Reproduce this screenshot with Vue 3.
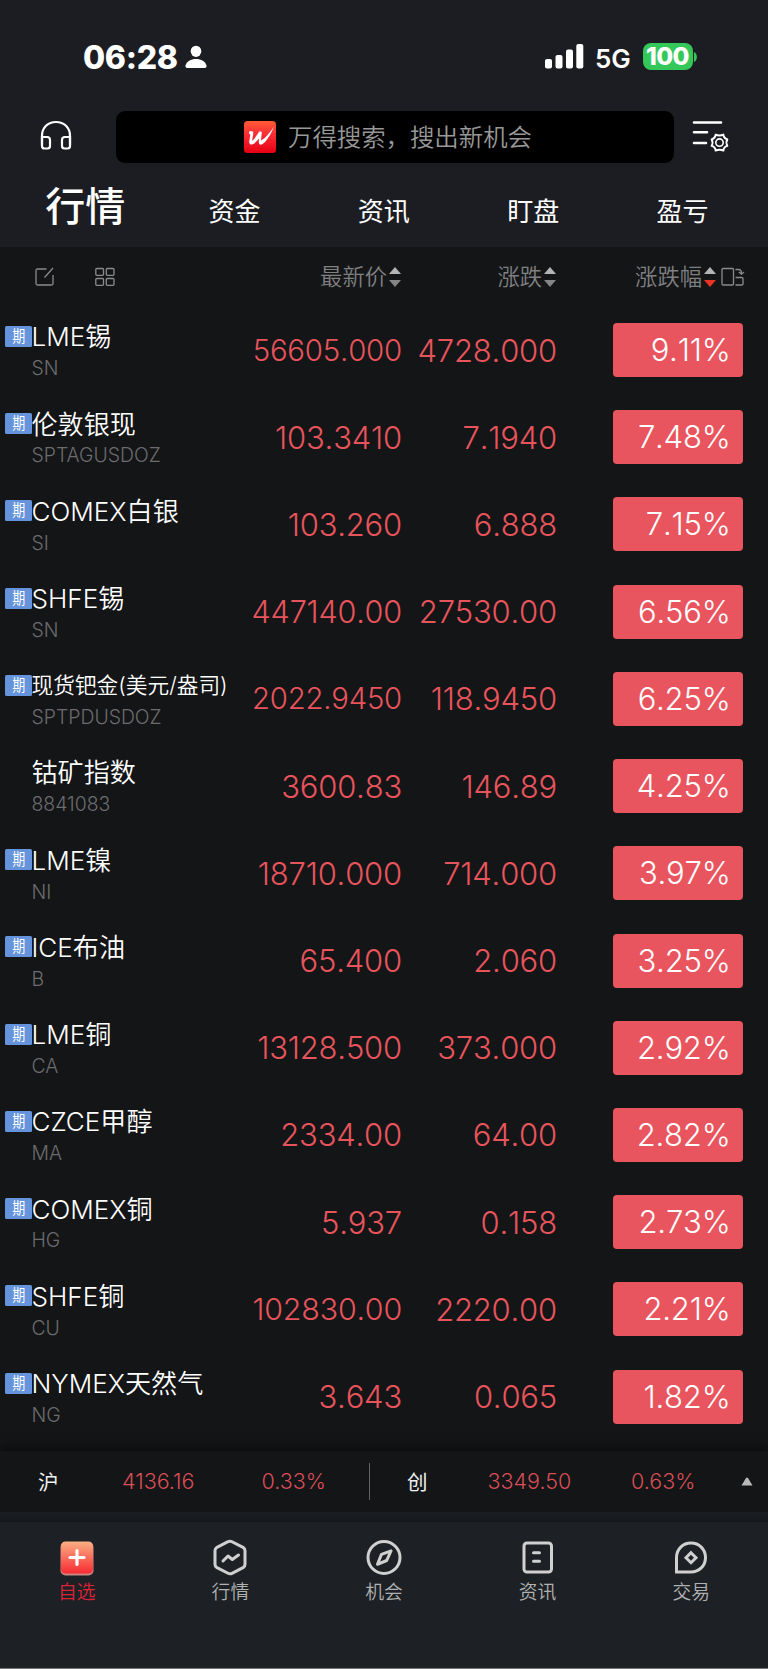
<script setup>
const tabs = ['行情', '资金', '资讯', '盯盘', '盈亏']
// `fit` is the reduced font size for prices that would overflow their column
const quotes = [
  { name: 'LME锡', code: 'SN', price: '56605.000', change: '4728.000', pct: '9.11%', future: true, fit: 29.4 },
  { name: '伦敦银现', code: 'SPTAGUSDOZ', price: '103.3410', change: '7.1940', pct: '7.48%', future: true },
  { name: 'COMEX白银', code: 'SI', price: '103.260', change: '6.888', pct: '7.15%', future: true },
  { name: 'SHFE锡', code: 'SN', price: '447140.00', change: '27530.00', pct: '6.56%', future: true, fit: 30.6 },
  { name: '现货钯金(美元/盎司)', code: 'SPTPDUSDOZ', price: '2022.9450', change: '118.9450', pct: '6.25%', future: true, long: true, fit: 29.3 },
  { name: '钴矿指数', code: '8841083', price: '3600.83', change: '146.89', pct: '4.25%', future: false },
  { name: 'LME镍', code: 'NI', price: '18710.000', change: '714.000', pct: '3.97%', future: true },
  { name: 'ICE布油', code: 'B', price: '65.400', change: '2.060', pct: '3.25%', future: true },
  { name: 'LME铜', code: 'CA', price: '13128.500', change: '373.000', pct: '2.92%', future: true },
  { name: 'CZCE甲醇', code: 'MA', price: '2334.00', change: '64.00', pct: '2.82%', future: true },
  { name: 'COMEX铜', code: 'HG', price: '5.937', change: '0.158', pct: '2.73%', future: true },
  { name: 'SHFE铜', code: 'CU', price: '102830.00', change: '2220.00', pct: '2.21%', future: true, fit: 30.4 },
  { name: 'NYMEX天然气', code: 'NG', price: '3.643', change: '0.065', pct: '1.82%', future: true },
]
</script>

<template>
  <div class="screen">
    <header class="top">
      <div class="status">
        <span class="clock">06:28</span>
        <svg class="person" width="22" height="24" viewBox="0 0 22 24">
          <ellipse cx="11" cy="6.3" rx="5.3" ry="5.6" fill="#fff" />
          <path d="M2.4 23C.8 23 .2 22 .5 20.600C1.500 16.500 5.800 14 11 14s9.500 2.500 10.500 6.600C21.800 22 21.200 23 19.600 23z" fill="#fff" />
        </svg>
        <svg class="signal" width="39" height="26" viewBox="0 0 39 26" fill="#fff">
          <rect x="0" y="15" width="7" height="9.500" rx="2" />
          <rect x="10.500" y="11" width="7" height="13.500" rx="2" />
          <rect x="21" y="5.500" width="7" height="19" rx="2" />
          <rect x="31.300" y="0" width="7" height="24.500" rx="2" />
        </svg>
        <span class="net">5G</span>
        <span class="battery">100</span>
        <svg class="nub" width="4" height="10" viewBox="0 0 4 10"><path d="M0 0C3.800 1.500 3.800 8.500 0 10z" fill="#34c759" /></svg>
      </div>

      <div class="searchbar">
        <svg class="phones" width="32" height="30" viewBox="0 0 32 30" fill="none" stroke="#fff" stroke-width="2.200">
          <path d="M2 25V16C2 7.500 8 2 16 2s14 5.500 14 14v9" />
          <path d="M2 17h5q3 0 3 3v6q0 2.500-2.500 2.500H4.500Q2 28.500 2 26zM30 17h-5q-3 0-3 3v6q0 2.500 2.500 2.500h3q2.500 0 2.500-2.500z" />
        </svg>
        <div class="search">
          <svg class="logo" width="32" height="32" viewBox="0 0 32 32">
            <defs>
              <linearGradient id="logoFill" x1="0" y1="0" x2="0" y2="1">
                <stop offset="0" stop-color="#ff5a36" />
                <stop offset=".45" stop-color="#fa2a36" />
                <stop offset="1" stop-color="#e60012" />
              </linearGradient>
            </defs>
            <rect width="32" height="32" rx="3.500" fill="url(#logoFill)" />
            <path d="M5 10.800C7 9.300 9.600 10 9.300 12.500L8.100 19.800C11 17.800 13.500 13 15.200 10.600C16.500 10.500 17.800 10.600 17.800 11.500L17 19.500C21 17.500 25.500 12 30 5.500C27.500 12 22.500 21 18.300 23.200C16 24.400 14.600 23 14.800 20.500L15 17.500C13 20 10.800 22.500 8.600 23.300C6.300 24 5 22.700 5.200 20.500L6.200 14.500Q6.500 12.800 5 12.700z" fill="#fff" />
          </svg>
          <span class="hint">万得搜索，搜出新机会</span>
        </div>
        <svg class="filter" width="38" height="34" viewBox="0 0 38 34" fill="none" stroke="#fff" stroke-linecap="round">
          <path d="M2 2.500h27M2 12.300h13M2 23h12" stroke-width="2.600" />
          <path d="M23.600 14.600Q27.500 16.400 31.400 14.600Q31.500 18 35.400 19.300Q33.500 22.500 35.400 25.900Q31.500 27 31.400 30.600Q27.500 28.800 23.600 30.600Q23.500 27 19.600 25.900Q21.500 22.500 19.600 19.300Q23.500 18 23.600 14.600z" stroke-width="1.900" stroke-linejoin="round" />
          <circle cx="27.500" cy="22.600" r="3.700" stroke-width="1.600" />
        </svg>
      </div>

      <nav class="tabs">
        <span v-for="(t, i) in tabs" :key="t" class="tab" :class="{ active: i === 0 }">{{ t }}</span>
      </nav>
    </header>

    <div class="cols">
      <div class="tools">
        <svg width="20" height="20" viewBox="0 0 20 20" fill="none" stroke="#8b8b8d" stroke-width="1.300">
          <path d="M11.500 2H2.500Q1 2 1 3.500v13Q1 18 2.500 18h14Q18 18 18 16.500V8M9.500 10.500L18 1" />
        </svg>
        <svg width="20" height="20" viewBox="0 0 20 20" fill="none" stroke="#8b8b8d" stroke-width="1.300">
          <rect x=".8" y="1.500" width="7.700" height="6.800" rx="1" /><rect x="11.300" y="1.500" width="7.700" height="6.800" rx="1" />
          <rect x=".8" y="11.500" width="7.700" height="6.800" rx="1" /><rect x="11.300" y="11.500" width="7.700" height="6.800" rx="1" />
        </svg>
      </div>
      <div v-for="label in ['最新价', '涨跌', '涨跌幅']" :key="label" class="col">
        <span>{{ label }}</span>
        <svg class="sort" width="12" height="20" viewBox="0 0 12 20">
          <path d="M0 7L6 0l6 7z" fill="#b4b4b4" />
          <path d="M0 13h12l-6 7z" :fill="label === '涨跌幅' ? '#ec3323' : '#858585'" />
        </svg>
        <svg v-if="label === '涨跌幅'" class="swap" width="24" height="20" viewBox="0 0 24 20" fill="none" stroke="#8b8b8d" stroke-width="1.300">
          <rect x="1" y="1.500" width="11.500" height="16.500" rx="1" />
          <path d="M14.500 2.500h3q3 0 3 4M17.800 5l2.700 2.200L23 5M14.500 10.500h6.300q1.200 0 1.200 1.200v5q0 1.300-1.200 1.300h-6.300" />
        </svg>
      </div>
    </div>

    <main class="list">
      <div v-for="q in quotes" :key="q.name" class="row">
        <span class="tag" :class="{ none: !q.future }"><b>{{ q.future ? '期' : '' }}</b></span>
        <div class="title">
          <span class="name" :class="{ long: q.long }">{{ q.name }}</span>
          <span class="code">{{ q.code }}</span>
        </div>
        <span class="num price" :style="q.fit ? { fontSize: q.fit + 'px' } : null">{{ q.price }}</span>
        <span class="num change">{{ q.change }}</span>
        <span class="num pct">{{ q.pct }}</span>
      </div>
    </main>

    <div class="ticker">
      <span class="idx first">沪</span>
      <span class="val v1">4136.16</span>
      <span class="val v2">0.33%</span>
      <i class="bar"></i>
      <span class="idx">创</span>
      <span class="val v3">3349.50</span>
      <span class="val v4">0.63%</span>
      <svg class="up" width="12" height="9" viewBox="0 0 12 9"><path d="M.5 8.500L5 1Q6 0 7 1l4.500 7.500z" fill="#b9b9b9" /></svg>
    </div>

    <footer class="dock">
      <div class="item on">
        <svg width="36" height="38" viewBox="0 0 36 38">
          <defs>
            <linearGradient id="plusFill" x1="0" y1="0" x2="0" y2="1">
              <stop offset="0" stop-color="#fbb084" /><stop offset="1" stop-color="#f82b33" />
            </linearGradient>
          </defs>
          <rect x="1.500" y="3" width="33" height="33.500" rx="5" fill="#c98580" />
          <rect x="2" y="2.500" width="32" height="32" rx="4.500" fill="url(#plusFill)" />
          <path d="M18 11.500v14M11 18.500h14" stroke="#fff" stroke-width="3.200" stroke-linecap="round" />
        </svg>
        <span>自选</span>
      </div>
      <div class="item">
        <svg width="36" height="38" viewBox="0 0 36 38" fill="none" stroke="#d0d0d0" stroke-width="3" stroke-linejoin="round" stroke-linecap="round">
          <path d="M16 2.700Q18 1.600 20 2.700L31.500 8.700Q33 9.700 33 11.700V25.300Q33 27.300 31.500 28.300L20 34.300Q18 35.400 16 34.300L4.500 28.300Q3 27.300 3 25.300V11.700Q3 9.700 4.500 8.700z" />
          <path d="M11 22l5-5 4.300 3.500 6.200-4.500" />
        </svg>
        <span>行情</span>
      </div>
      <div class="item">
        <svg width="36" height="38" viewBox="0 0 36 38" fill="none" stroke="#d0d0d0" stroke-width="3" stroke-linejoin="round">
          <circle cx="18" cy="18.500" r="16" />
          <path d="M25 11.800L15.500 15.300L11.500 25.300L20.700 21.500z" />
        </svg>
        <span>机会</span>
      </div>
      <div class="item">
        <svg width="36" height="38" viewBox="0 0 36 38" fill="none" stroke="#d0d0d0" stroke-width="3">
          <rect x="4" y="4" width="27.500" height="29" rx="3" />
          <path d="M13.500 13.800h6M13.500 22.300h6" stroke-linecap="round" />
        </svg>
        <span>资讯</span>
      </div>
      <div class="item">
        <svg width="36" height="38" viewBox="0 0 36 38" fill="none" stroke="#d0d0d0" stroke-width="3">
          <path d="M3.500 33V18.500C3.500 10 10 4 18 4s14.500 6 14.500 14.500S26 33 18 33z" />
          <path d="M18 13.700l5 5-5 5-5-5z" />
        </svg>
        <span>交易</span>
      </div>
    </footer>
  </div>
</template>

<style>
body { background: #141517; }
</style>

<style scoped>
.screen {
  width: 768px; height: 1669px; box-sizing: border-box; overflow: hidden;
  display: flex; flex-direction: column; background: #141517; color: #fff;
  font-family: Inter, "Noto Sans CJK SC", sans-serif;
}
.screen svg { display: block; flex: none; }
.screen span { white-space: nowrap; }
.top { height: 247px; flex: none; background: #1c1d22; }
.status { height: 111px; box-sizing: border-box; padding: 0 0 0 83px; display: flex; align-items: center; }
.clock { font-size: 32px; font-weight: 800; width: 102px; flex: none; letter-spacing: -.3px; line-height: 40px; padding-top: 4px; }
.person { margin-top: 3px; }
.signal { margin-left: 338px; margin-top: 3px; }
.net { font-size: 26px; font-weight: 600; width: 47.500px; flex: none; margin-left: 11px; padding-top: 5px; letter-spacing: -.2px; }
.battery {
  width: 50px; height: 27px; flex: none; border-radius: 8px; background: #34c759; text-align: center;
  font-size: 24.500px; line-height: 27px; font-weight: 800; letter-spacing: -.6px; margin-top: 2px;
}
.nub { margin: 2px 0 0 1.500px; }
.searchbar { height: 52px; display: flex; align-items: center; padding-left: 40px; }
.phones { margin-top: -4px; }
.search {
  width: 558px; height: 52px; box-sizing: border-box; margin: 0 18px 0 43.500px; padding-left: 128px;
  background: #000; border-radius: 9px; display: flex; align-items: center; gap: 12.500px;
}
.hint { font-size: 24.400px; font-weight: 350; color: #989898; line-height: 52px; }
.tabs { height: 84px; display: flex; padding-left: 10.600px; }
.tab { width: 149.300px; text-align: center; font-size: 26px; line-height: 98px; height: 84px; }
.tab.active { font-size: 40px; font-weight: 500; line-height: 87px; }

.cols { height: 59.400px; flex: none; display: grid; grid-template-columns: 240px 161px 155px 189px; }
.tools { display: flex; align-items: center; gap: 40px; padding-left: 35px; }
.col { display: flex; align-items: center; justify-content: flex-end; color: #808082; font-size: 22.300px; font-weight: 350; }
.col span { margin-top: -4px; }
.sort { margin-left: 2px; }
.swap { margin-left: 5px; }

.list { flex: none; height: 1144.600px; }
.row { height: 87.230px; display: grid; grid-template-columns: 27px 208px 162px 155px 130px; padding-left: 5px; align-items: center; }
.tag {
  align-self: start; margin-top: 19.500px; height: 21px; background: #6594dc; border-radius: 1.500px;
  font-size: 15.500px; line-height: 21px; text-align: center;
}
.tag b { display: inline-block; font-weight: 400; transform: scaleX(.84); }
.tag.none { background: none; }
.title { align-self: start; display: flex; flex-direction: column; margin-left: -.5px; }
.name { height: 60px; line-height: 61px; font-size: 26.100px; font-weight: 350; }
.name.long { font-size: 21.700px; }
.code { font-size: 19.400px; line-height: 24px; margin-top: -10.200px; font-weight: 300; color: #6c6c6e; }
.num { text-align: right; font-size: 31px; font-weight: 330; color: #e8545c; font-kerning: none; letter-spacing: -.2px; }
.pct {
  margin-left: 56px; width: 129.500px; height: 54px; line-height: 54px; box-sizing: border-box; padding-right: 12px;
  background: #e9555e; color: #fff; border-radius: 4px;
}

.ticker {
  height: 61px; flex: none; display: flex; align-items: center; background: #141517;
  box-shadow: 0 -3px 10px rgba(0, 0, 0, .5);
}
.idx { font-size: 20.500px; width: 84px; color: #f0f0f0; }
.idx.first { margin-left: 38px; }
.val { font-size: 21.500px; font-weight: 330; color: #d94e57; flex: none; }
.v1 { width: 139.500px; }
.v2 { width: 107px; }
.bar { width: 1.500px; height: 37px; background: #626365; margin-right: 37px; }
.v3 { width: 143.500px; margin-left: -3.500px; }
.v4 { width: 110px; }

.dock {
  flex: 1; display: flex; border-bottom: 1px solid #77777a; padding-top: 27px;
  background: linear-gradient(#1b1f23, #15191c 9.900px, #1d2125 10px); position: relative;
}
.item { flex: 1; display: flex; flex-direction: column; align-items: center; font-size: 18.800px; font-weight: 350; color: #b0b1b2; }
.item span { line-height: 28px; margin-top: 2.500px; }
.item.on span { color: #dc2335; }
</style>
